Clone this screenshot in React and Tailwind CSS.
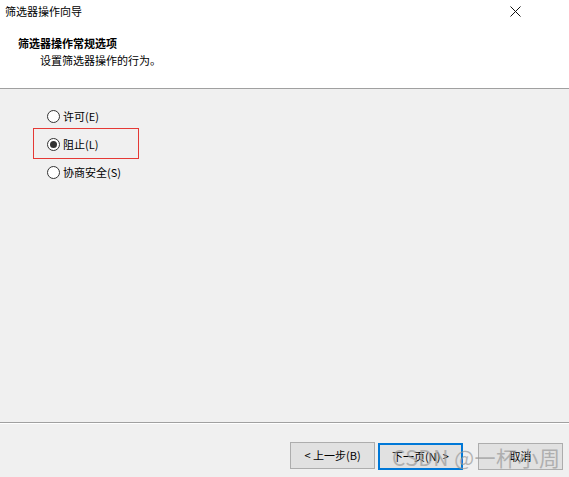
import React from 'react';

const font = { fontFamily: '"Noto Sans CJK SC", "Noto Sans", sans-serif' };

const Radio = ({ label, checked }) => (
  <div className="flex items-center h-[28px] gap-[3px]">
    <span className="w-[13px] h-[13px] rounded-full border border-[#333] bg-white flex items-center justify-center">
      {checked && <span className="w-[7px] h-[7px] rounded-full bg-[#333]" />}
    </span>
    <span className="text-[11px] text-black">{label}</span>
  </div>
);

const Button = ({ children, primary }) => (
  <button
    className={`w-[85px] h-[27px] text-[11px] text-black bg-[#e1e1e1] ${
      primary ? 'border-2 border-[#0078d7]' : 'border border-[#adadad]'
    }`}
  >
    {children}
  </button>
);

export default function App() {
  return (
    <div className="w-[569px] h-[477px] flex flex-col bg-[#f0f0f0] relative overflow-hidden" style={font}>
      <div className="h-[88px] bg-white flex flex-col">
        <div className="h-[22px] flex items-center justify-between pl-[5px]">
          <span className="text-[11px] text-black">筛选器操作向导</span>
          <svg width="11" height="11" viewBox="0 0 11 11" className="mr-[48px]">
            <path d="M0.5 0.5 L10.5 10.5 M10.5 0.5 L0.5 10.5" stroke="#111" strokeWidth="1" />
          </svg>
        </div>
        <div className="pl-[18px] pt-[13px] text-[11px] font-bold text-black leading-[17px]">筛选器操作常规选项</div>
        <div className="pl-[40px] text-[11px] text-black leading-[17px]">设置筛选器操作的行为。</div>
      </div>
      <div className="h-px bg-[#a0a0a0]" />
      <div className="flex-1 pl-[47px] pt-[13px] flex flex-col">
        <Radio label="许可(E)" />
        <div className="relative">
          <Radio label="阻止(L)" checked />
          <div className="absolute left-[-14px] top-[-2px] w-[106px] h-[31px] border border-[#e53935]" />
        </div>
        <Radio label="协商安全(S)" />
      </div>
      <div className="h-px bg-[#a0a0a0]" />
      <div className="h-px bg-white" />
      <div className="h-[53px] flex items-start pt-[18px] pl-[290px]">
        <Button>&lt; 上一步(B)</Button>
        <div className="ml-[3px]">
          <Button primary>下一页(N) &gt;</Button>
        </div>
        <div className="ml-[15px]">
          <Button>取消</Button>
        </div>
      </div>
      <div className="absolute left-[392px] top-[442px] whitespace-nowrap text-[21px] text-[#9a9a9a] opacity-70 tracking-[0.5px] pointer-events-none">
        CSDN @一杯小周
      </div>
    </div>
  );
}
